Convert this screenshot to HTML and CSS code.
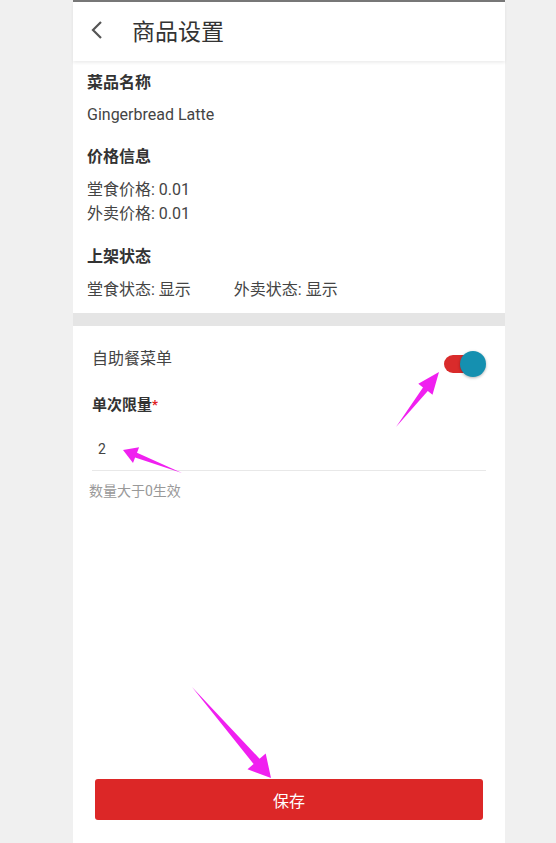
FILE: index.html
```html
<!DOCTYPE html>
<html lang="zh-CN">
<head>
    <meta charset="UTF-8">
    <meta name="viewport" content="width=device-width, initial-scale=1.0">
    <link rel="stylesheet" href="styles.css">
    <title>商品设置</title>
</head>
<body>
    <div class="phone">
        <header class="top-bar">
            <svg class="back" width="16" height="22" viewBox="0 0 16 22">
                <polyline points="12,3 4,11 12,19" fill="none" stroke="#555" stroke-width="2.2"/>
            </svg>
            <h1>商品设置</h1>
        </header>

        <section class="info">
            <div class="group">
                <h2>菜品名称</h2>
                <p class="name">Gingerbread Latte</p>
            </div>
            <div class="group">
                <h2>价格信息</h2>
                <p>堂食价格: 0.01</p>
                <p>外卖价格: 0.01</p>
            </div>
            <div class="group">
                <h2>上架状态</h2>
                <div class="status">
                    <p>堂食状态: 显示</p>
                    <p>外卖状态: 显示</p>
                </div>
            </div>
        </section>

        <section class="buffet">
            <div class="switch-row">
                <span>自助餐菜单</span>
                <div class="switch"><span class="knob"></span></div>
            </div>
            <label class="field-label">单次限量<em>*</em></label>
            <div class="field">2</div>
            <p class="hint">数量大于0生效</p>
        </section>

        <button class="save">保存</button>
    </div>

    <!-- annotation arrows -->
    <svg class="arrows" width="556" height="843" viewBox="0 0 556 843">
        <polygon points="396,427 423,387.5 418.3,383.8 439,372 432.5,394.8 427.8,391.1"/>
        <polygon points="182,473 137,452.7 139.1,447.2 123,450 133,463 135.1,457.4"/>
        <polygon points="192,687 259.6,758.8 265.7,753.5 271,778 247.5,769.3 253.6,764"/>
    </svg>
</body>
</html>
```

FILE: styles.css
```css
body {
    margin: 0;
    background-color: #f0f0f0;
    font-family: Roboto, "Noto Sans CJK SC", sans-serif;
    color: #444;
}

.phone {
    width: 432px;
    margin-left: 73px;
    min-height: 100vh;
    background-color: #fff;
    border-top: 2px solid #777;
    box-sizing: border-box;
    display: flex;
    flex-direction: column;
}

.top-bar {
    height: 59px;
    display: flex;
    align-items: center;
    padding: 0 0 3px 16px;
    box-sizing: border-box;
    box-shadow: 0 2px 3px rgba(0, 0, 0, 0.07);
}

.top-bar .back {
    margin-right: 27px;
}

.top-bar h1 {
    margin: 0;
    font-size: 23px;
    font-weight: normal;
    color: #333;
}

.info {
    padding: 11px 14px 11px;
    border-bottom: 13px solid #e5e5e5;
}

.group {
    margin-bottom: 20px;
}

.group:last-child {
    margin-bottom: 0;
}

.group h2 {
    margin: 0 0 10px;
    font-size: 16px;
    line-height: 22px;
    color: #333;
}

.group p {
    margin: 0;
    font-size: 16px;
    line-height: 24px;
}

.group .name {
    line-height: 22px;
}

.status {
    display: flex;
    gap: 43px;
}

.buffet {
    padding: 19px 19px 0;
}

.switch-row {
    display: flex;
    justify-content: space-between;
    align-items: center;
    font-size: 16px;
    line-height: 22px;
}

.switch {
    position: relative;
    width: 28px;
    height: 18px;
    margin: 10px 14px 0 0;
    border-radius: 9px;
    background-color: #d92b2b;
}

.switch .knob {
    position: absolute;
    right: -14px;
    top: -4px;
    width: 26px;
    height: 26px;
    border-radius: 50%;
    background-color: #1590b0;
    box-shadow: 0 1px 3px rgba(0, 0, 0, 0.3);
}

.field-label {
    display: block;
    margin-top: 21px;
    font-size: 15px;
    font-weight: bold;
    line-height: 22px;
    color: #333;
}

.field-label em {
    color: #e02020;
    font-style: normal;
    font-size: 13px;
    vertical-align: top;
}

.field {
    height: 43px;
    padding-left: 6px;
    margin-top: 12px;
    font-size: 14px;
    line-height: 42px;
    border-bottom: 1px solid #e8e8e8;
    box-sizing: border-box;
}

.hint {
    margin: 11px 0 0 -3px;
    font-size: 14px;
    line-height: 18px;
    color: #999;
}

.save {
    margin: auto 22px 23px;
    height: 41px;
    border: none;
    border-radius: 3px;
    background-color: #dc2727;
    color: #fff;
    font-family: inherit;
    font-size: 16px;
}

.arrows {
    position: absolute;
    top: 0;
    left: 0;
    pointer-events: none;
}

.arrows polygon {
    fill: #f020f0;
}
```
